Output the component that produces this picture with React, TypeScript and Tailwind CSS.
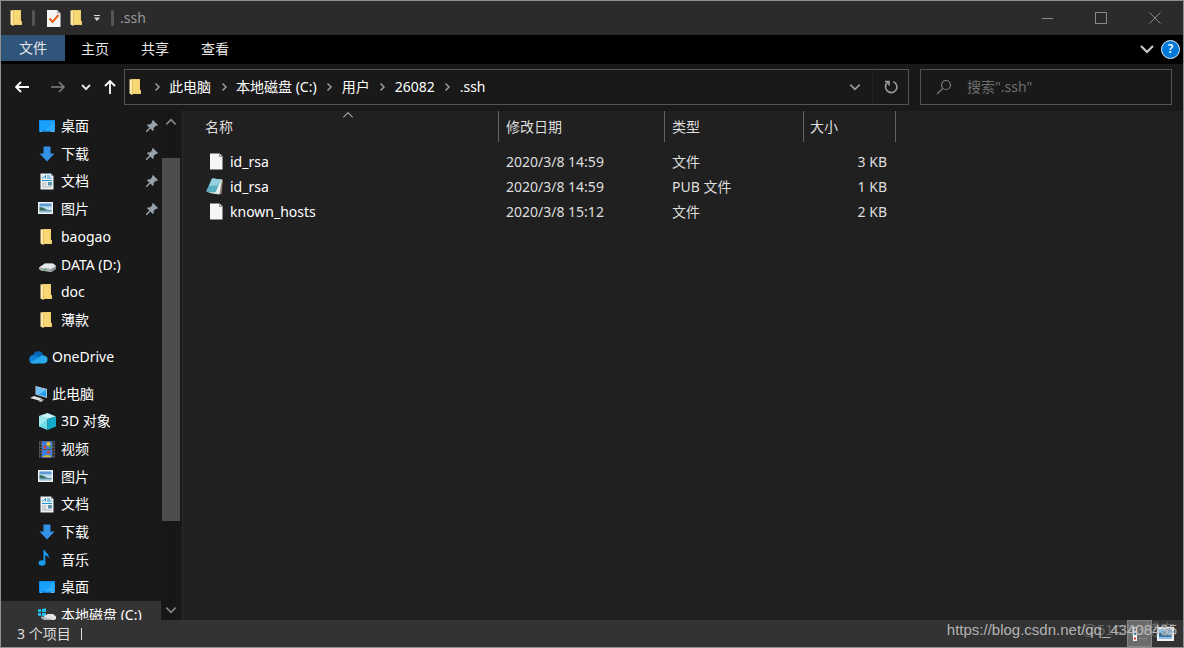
import type { ReactNode } from "react";

type IconProps = { className?: string };

function FolderIcon({ className = "" }: IconProps) {
  return (
    <svg viewBox="0 0 16 16" className={`size-4 shrink-0 ${className}`}>
      <path d="M3 0h9v10.500l1 1V15H3z" fill="#e9c265" />
      <path d="M5 .5h6.500v10.300l1 1V14.500H5z" fill="#f8d775" />
      <path d="M1.500 0l3 1.500V16l-3-1.500z" fill="#ffeaa8" />
      <path d="M4.500 1.500V16" stroke="#d9ae4c" strokeWidth="0.600" />
    </svg>
  );
}

function DesktopIcon() {
  return (
    <svg viewBox="0 0 16 16" className="size-4 shrink-0">
      <rect x="0" y="2" width="16" height="12" fill="#0f78d0" />
      <rect x="0.500" y="2.500" width="15" height="10" fill="#18a0fb" />
      <path d="M6 12.500L15.500 4v8.500z" fill="#2fabff" />
      <path d="M1 13.300h2m9 0h3" stroke="#bfe4ff" strokeWidth="0.700" />
    </svg>
  );
}

function DownloadIcon() {
  return (
    <svg viewBox="0 0 16 16" className="size-4 shrink-0">
      <path d="M4.500 .5h7v7H15.500L8 15.500 .5 7.500h4z" fill="#3391e6" />
    </svg>
  );
}

function DocumentIcon() {
  return (
    <svg viewBox="0 0 16 17" className="h-[17px] w-4 shrink-0">
      <path d="M1.500 .5H12l2.500 2.500v13.500h-13z" fill="#eef0f1" />
      <path d="M12 .5V3h2.500z" fill="#8f969c" />
      <path d="M3 5.500C4.500 5 5.500 3 6.500 2.500V5.500M8 3h3M8 5h4.500M3 7.500h10" stroke="#2492d2" fill="none" />
      <path d="M3 10h4.500M3 12h4.500M3 14h9.500" stroke="#a5abb0" strokeWidth="0.900" />
      <rect x="9" y="9" width="4" height="3.500" fill="#5a93ae" />
    </svg>
  );
}

function PictureIcon() {
  return (
    <svg viewBox="0 0 16 16" className="-ml-0.5 size-4 shrink-0">
      <rect x="0" y="1" width="15" height="12" fill="#f2f2f2" />
      <rect x="1.500" y="2.500" width="12" height="9" fill="#c4def1" />
      <path d="M1.500 2.500h12v3h-12z" fill="#5f9bd4" />
      <path d="M1.500 5.500h12v1.500l-12-.5z" fill="#b9d8ee" />
      <path d="M1.500 6l3 .5 5 2.500h4v1h-12z" fill="#376d58" />
      <path d="M1.500 9.500h12v2h-12z" fill="#8fbad4" />
    </svg>
  );
}

function DriveIcon() {
  return (
    <svg viewBox="0 0 17 16" className="h-4 w-[17px] shrink-0">
      <path d="M0 10.500l6-4h8l3 2.500v3l-4 3-11-1.500-2-1.500z" fill="#8d9296" />
      <path d="M0 10.500l6-4h8l3 2.500-5 3z" fill="#e6e9eb" />
      <path d="M0 10.500l12 1.500v3l-10-1.500-2-1.500z" fill="#a7acb0" />
      <path d="M4.500 12.500l3 .5" stroke="#35c24b" strokeWidth="1.200" />
    </svg>
  );
}

function SystemDriveIcon() {
  return (
    <svg viewBox="0 0 18 16" className="h-4 w-[18px] shrink-0">
      <path d="M0 2.500l3-.5v3H0zM4 2l4-.8V5H4zM0 6h3v3l-3-.4zM4 6h4v4l-4-.7z" fill="#1fc3ef" />
      <path d="M6 9l4-2h5l3 2.500V12l-4 2-7-1z" fill="#e2e5e7" />
      <path d="M3 9.500l11 2.500v2.500L6 13l-3-2z" fill="#b4b9bc" />
    </svg>
  );
}

function OneDriveIcon() {
  return (
    <svg viewBox="0 0 19 13" className="h-[13px] w-[19px] shrink-0">
      <path d="M4 5A5.200 5.200 0 0 1 14 3.500L16 6 9 9 2 7z" fill="#0364b8" />
      <path d="M4.800 4.300A4 4 0 0 1 8 5l7 3.500-8 4H4A4.100 4.100 0 0 1 4.800 4.300z" fill="#0f7fd8" />
      <path d="M10 6.500A4.600 4.600 0 0 1 15.500 4.800 3.900 3.900 0 0 1 15 12.500H4a4 4 0 0 1-2.800-1.200z" fill="#28a8ea" />
    </svg>
  );
}

function ComputerIcon() {
  return (
    <svg viewBox="0 0 17 16" className="h-4 w-[17px] shrink-0">
      <path d="M5.500 0l11.500 3v9L5.500 8.500z" fill="#cfd8df" />
      <path d="M6.500 1.200l9.800 2.500v7.300L6.500 8z" fill="#249cf0" />
      <path d="M6.500 1.200l9.800 2.500L9 8.600 6.500 8z" fill="#6cc3fb" />
      <path d="M0 12l4-2 8 2.500-3 2z" fill="#e3e6e8" />
      <path d="M8 15l4-2 2 .8-3 2.200z" fill="#c1c7cb" />
    </svg>
  );
}

function CubeIcon() {
  return (
    <svg viewBox="0 0 17 17" className="size-[17px] shrink-0">
      <path d="M8.500 0L17 3.500 8.500 6 0 3z" fill="#c4f3f8" />
      <path d="M0 3l8.500 3v11L0 13.500z" fill="#6edce9" />
      <path d="M17 3.500L8.500 6v11L17 13.500z" fill="#13a9c8" />
      <path d="M0 3l8.500 3L0 13.500z" fill="#9deaf2" />
    </svg>
  );
}

function VideoIcon() {
  return (
    <svg viewBox="0 0 16 17" className="h-[17px] w-4 shrink-0">
      <rect width="16" height="17" fill="#55585c" />
      <path d="M1.500 1v16M14.500 1v16" stroke="#151515" strokeWidth="1.500" strokeDasharray="1.500 1.500" />
      <rect x="3" y="0.500" width="10" height="7.500" fill="#3c7fe0" />
      <rect x="3" y="9" width="10" height="7.500" fill="#3c7fe0" />
      <circle cx="9.500" cy="3" r="2" fill="#f0c32b" />
      <circle cx="6" cy="6" r="1.600" fill="#d8432c" />
      <circle cx="11" cy="6" r="1.300" fill="#48a543" />
      <circle cx="9.500" cy="11" r="1.600" fill="#d8432c" />
      <path d="M4 15.500l3-1.500 5 .5v1.500H4z" fill="#e2b02a" />
    </svg>
  );
}

function MusicIcon() {
  return (
    <svg viewBox="0 0 16 16" className="-mt-1 -ml-1 size-4 shrink-0">
      <ellipse cx="5" cy="13" rx="3.500" ry="2.700" fill="#189bf0" />
      <path d="M6.500 0H8c.3 3 4.500 3.500 3.600 8.200C10.800 6 9.500 5.500 8.300 5.200V13H6.500z" fill="#189bf0" />
    </svg>
  );
}

function PinIcon() {
  return (
    <svg viewBox="0 0 12 12" className="size-3 shrink-0">
      <path d="M7 0l5 5-1 1-1-.3L7.600 8l.2 2-1 1-2.400-2.400L1 12l-1 0 0-1 3.400-3.400L1 5.200l1-1 2 .2L6.300 2 6 1z" fill="#98a2ab" />
    </svg>
  );
}

function Chevron({ d, className }: { d: string; className: string }) {
  return (
    <svg viewBox="0 0 12 12" className={`shrink-0 ${className}`} fill="none" stroke="currentColor">
      <path d={d} />
    </svg>
  );
}

const DOWN = "M2 4l4 4 4-4";
const UP = "M2 8l4-4 4 4";
const RIGHT = "M4.500 2.500l3.500 3.500-3.500 3.500";

function BlankFileIcon() {
  return (
    <svg viewBox="0 0 16 18" className="h-[18px] w-4 shrink-0">
      <path d="M2 .5h9.500l3 3v13H2z" fill="#f6f6f6" />
      <path d="M11.500 .5v3h3" fill="#d5d5d5" stroke="#777" strokeWidth="0.800" />
    </svg>
  );
}

function NotebookIcon() {
  return (
    <svg viewBox="0 0 18 18" className="-ml-0.5 h-[18px] w-[18px] shrink-0">
      <path d="M14 1l3 1-1.500 14.500L12 15z" fill="#8f7c63" />
      <path d="M7 .5l9 1-2.500 15L7 15z" fill="#e4eff1" />
      <path d="M6 .5l9 1-5.500 13L0 13.500z" fill="#58aebf" />
      <path d="M6 .5l9 1-3 6-9 .5z" fill="#94cfdb" />
      <path d="M0 13.500l9.500 1 4 2L6 15.500z" fill="#cfdfe2" />
    </svg>
  );
}

type NavItem = { label: string; icon: ReactNode; pinned?: boolean; root?: boolean; active?: boolean };

const quickAccess: NavItem[] = [
  { label: "桌面", icon: <DesktopIcon />, pinned: true },
  { label: "下载", icon: <DownloadIcon />, pinned: true },
  { label: "文档", icon: <DocumentIcon />, pinned: true },
  { label: "图片", icon: <PictureIcon />, pinned: true },
  { label: "baogao", icon: <FolderIcon /> },
  { label: "DATA (D:)", icon: <DriveIcon /> },
  { label: "doc", icon: <FolderIcon /> },
  { label: "薄款", icon: <FolderIcon /> },
];

const oneDrive: NavItem = { label: "OneDrive", icon: <OneDriveIcon />, root: true };

const thisPc: NavItem[] = [
  { label: "此电脑", icon: <ComputerIcon />, root: true },
  { label: "3D 对象", icon: <CubeIcon /> },
  { label: "视频", icon: <VideoIcon /> },
  { label: "图片", icon: <PictureIcon /> },
  { label: "文档", icon: <DocumentIcon /> },
  { label: "下载", icon: <DownloadIcon /> },
  { label: "音乐", icon: <MusicIcon /> },
  { label: "桌面", icon: <DesktopIcon /> },
  { label: "本地磁盘 (C:)", icon: <SystemDriveIcon />, active: true },
];

const files = [
  { name: "id_rsa", date: "2020/3/8 14:59", type: "文件", size: "3 KB", icon: <BlankFileIcon /> },
  { name: "id_rsa", date: "2020/3/8 14:59", type: "PUB 文件", size: "1 KB", icon: <NotebookIcon /> },
  { name: "known_hosts", date: "2020/3/8 15:12", type: "文件", size: "2 KB", icon: <BlankFileIcon /> },
];

const crumbs = ["此电脑", "本地磁盘 (C:)", "用户", "26082", ".ssh"];

function NavRow({ item }: { item: NavItem }) {
  return (
    <li className={item.active ? "bg-[#333333]" : ""}>
      <a href="#" className={`flex h-full items-center pr-[3px] text-white ${item.root ? "pl-7" : "pl-[37px]"}`}>
        <span className="flex w-[18px] shrink-0 justify-center">{item.icon}</span>
        <span className="ml-[5px] flex-1 whitespace-nowrap">{item.label}</span>
        {item.pinned && <PinIcon />}
      </a>
    </li>
  );
}

function TitleBar() {
  return (
    <header className="flex h-[34px] shrink-0 items-center bg-[#2b2b2b] text-[#999999]">
      <FolderIcon className="ml-2" />
      <span className="ml-[7px] h-4 w-[3px] rounded-xs bg-[#555555]" />
      <button aria-label="属性" className="ml-3">
        <svg viewBox="0 0 14 17" className="h-[17px] w-3.5">
          <path d="M0 0h10l3.500 3.500V17H0z" fill="#f5f5f5" />
          <path d="M10 0v3.500h3.500z" fill="#b5b5b5" />
          <path d="M2.500 8.500l3 3.500 6-7" fill="none" stroke="#e8611c" strokeWidth="2" />
        </svg>
      </button>
      <button aria-label="新建文件夹" className="ml-2">
        <FolderIcon />
      </button>
      <button aria-label="自定义快速访问工具栏" className="ml-2">
        <svg viewBox="0 0 8 8" className="size-2">
          <path d="M1 1.500h6" stroke="#dddddd" />
          <path d="M1 3.500h6L4 7z" fill="#dddddd" />
        </svg>
      </button>
      <span className="ml-2.5 h-4 w-[3px] rounded-xs bg-[#555555]" />
      <h1 className="ml-1.5">.ssh</h1>
      <div className="mr-px ml-auto flex h-full">
        <button aria-label="最小化" className="flex w-[54px] items-center justify-center">
          <span className="h-px w-[11px] bg-[#888888]" />
        </button>
        <button aria-label="最大化" className="flex w-[54px] items-center justify-center">
          <span className="size-3 border border-[#888888]" />
        </button>
        <button aria-label="关闭" className="flex w-[54px] items-center justify-center">
          <svg viewBox="0 0 12 12" className="size-3" stroke="#888888">
            <path d="M.5.5l11 11M11.500.5l-11 11" />
          </svg>
        </button>
      </div>
    </header>
  );
}

function Ribbon() {
  return (
    <nav className="flex h-[29px] shrink-0 bg-black text-[#e8e8e8]">
      <button className="h-[26px] w-16 bg-[#30557b]">文件</button>
      <button className="h-7 w-[60px]">主页</button>
      <button className="h-7 w-[60px]">共享</button>
      <button className="h-7 w-[60px]">查看</button>
      <button aria-label="展开功能区" className="ml-auto h-7 text-[#c8c8c8]">
        <Chevron d={DOWN} className="size-[18px] stroke-[1.500]" />
      </button>
      <button aria-label="帮助" className="mr-[3px] ml-[5px] flex h-7 items-center">
        <span className="flex size-[19px] items-center justify-center rounded-full border border-[#e5eef8] bg-[#0078d7] text-xs font-semibold text-white">
          ?
        </span>
      </button>
    </nav>
  );
}

function AddressBar() {
  return (
    <div className="flex shrink-0 bg-[#191919] pt-[5px] pr-[11px] pb-1.5 pl-[3px]">
      <button aria-label="后退" className="flex w-9 items-center justify-center text-white">
        <svg viewBox="0 0 14 12" className="h-3 w-3.5" fill="none" stroke="currentColor" strokeWidth="1.800">
          <path d="M14 6H1M6 1L1 6l5 5" />
        </svg>
      </button>
      <button aria-label="前进" className="flex w-9 items-center justify-center text-[#808080]">
        <svg viewBox="0 0 14 12" className="h-3 w-3.5" fill="none" stroke="currentColor" strokeWidth="1.500">
          <path d="M0 6h13M8 1l5 5-5 5" />
        </svg>
      </button>
      <button aria-label="最近浏览的位置" className="flex w-5 items-center justify-center text-[#e0e0e0]">
        <Chevron d={DOWN} className="size-3 stroke-2" />
      </button>
      <button aria-label="向上" className="flex w-7 items-center justify-center text-white">
        <svg viewBox="0 0 12 14" className="h-3.5 w-3" fill="none" stroke="currentColor" strokeWidth="1.800">
          <path d="M6 14V1M1 6l5-5 5 5" />
        </svg>
      </button>

      <div className="flex h-9 min-w-0 flex-1 items-center border border-[#535353] pl-[3px] text-white">
        <FolderIcon />
        {crumbs.map((crumb) => (
          <div key={crumb} className="flex items-center">
            <span className="flex w-[25px] justify-center text-[#9a9a9a]">
              <Chevron d={RIGHT} className="size-3 stroke-[1.500]" />
            </span>
            <button className="whitespace-nowrap">{crumb}</button>
          </div>
        ))}
        <button aria-label="以前的位置" className="ml-auto flex h-full w-[34px] items-center justify-center text-[#9a9a9a]">
          <Chevron d={DOWN} className="size-3.5 stroke-[1.500]" />
        </button>
        <button aria-label="刷新" className="flex h-full w-9 items-center justify-center border-l border-[#222222] text-[#9a9a9a]">
          <svg viewBox="0 0 14 14" className="size-3.5" fill="none" stroke="currentColor" strokeWidth="1.600">
            <path d="M9.500 1.700A5.700 5.700 0 1 1 4 2.200M1 1.500h4v4" />
          </svg>
        </button>
      </div>

      <label className="ml-[11px] flex h-9 w-[252px] items-center border border-[#535353] pl-[15px] text-[#7a7a7a]">
        <svg viewBox="0 0 16 16" className="size-4 shrink-0" fill="none" stroke="currentColor" strokeWidth="1.200">
          <circle cx="10" cy="6" r="4.500" />
          <path d="M7 9.300L1 15" />
        </svg>
        <input
          type="text"
          aria-label="搜索"
          placeholder={'搜索".ssh"'}
          className="ml-[15px] w-full min-w-0 bg-transparent outline-none placeholder:text-[#6d6d6d]"
        />
      </label>
    </div>
  );
}

function Sidebar() {
  return (
    <aside className="flex w-[182px] shrink-0 border-r border-[#2b2b2b] bg-[#191919]">
      <div className="mr-px flex-1 overflow-hidden pt-px">
        <ul className="grid h-[222px] auto-rows-fr">
          {quickAccess.map((item) => (
            <NavRow key={item.label} item={item} />
          ))}
        </ul>
        <ul className="my-[9px] grid h-7">
          <NavRow item={oneDrive} />
        </ul>
        <ul className="grid h-[249px] auto-rows-fr">
          {thisPc.map((item) => (
            <NavRow key={item.label} item={item} />
          ))}
        </ul>
      </div>
      <div className="mr-0.5 flex w-[18px] flex-col items-center bg-[#171717] text-[#858585]">
        <button aria-label="向上滚动" className="flex h-[22px] items-center">
          <Chevron d={UP} className="size-3.5 stroke-[1.500]" />
        </button>
        <div className="mt-[25px] h-[363px] w-full bg-[#4d4d4d]" />
        <button aria-label="向下滚动" className="mt-auto flex h-5 items-center">
          <Chevron d={DOWN} className="size-3.5 stroke-[1.500]" />
        </button>
      </div>
    </aside>
  );
}

function FileList() {
  return (
    <main className="relative min-w-0 flex-1 overflow-hidden bg-[#202020]">
      <Chevron d={UP} className="absolute top-[-3px] left-[158px] size-3.5 text-[#a0a0a0]" />
      <table className="w-[713px] table-fixed border-separate border-spacing-0 text-left text-[#dedede]">
        <colgroup>
          <col className="w-[316px]" />
          <col className="w-[166px]" />
          <col className="w-[139px]" />
          <col className="w-[92px]" />
        </colgroup>
        <thead>
          <tr className="h-[31px]">
            <th className="border-r border-[#636363] pl-[22px] font-normal">名称</th>
            <th className="border-r border-[#636363] pl-[7px] font-normal">修改日期</th>
            <th className="border-r border-[#636363] pl-[7px] font-normal">类型</th>
            <th className="border-r border-[#636363] pl-1.5 font-normal">大小</th>
          </tr>
        </thead>
        <tbody>
          <tr aria-hidden="true" className="h-[7px]" />
          {files.map((file, i) => (
            <tr key={i} className="h-[25px]">
              <td className="pl-[25px] text-white">
                <span className="flex items-center">
                  {file.icon}
                  <span className="ml-1.5">{file.name}</span>
                </span>
              </td>
              <td className="pl-[7px]">{file.date}</td>
              <td className="pl-[7px]">{file.type}</td>
              <td className="pr-[9px] text-right">{file.size}</td>
            </tr>
          ))}
        </tbody>
      </table>
    </main>
  );
}

function StatusBar() {
  return (
    <footer className="relative flex h-[27px] shrink-0 items-center bg-[#333333] pl-4 text-[#dedede]">
      <span>3 个项目</span>
      <span className="ml-2.5 h-3 w-px bg-[#dedede]" />
      <button aria-label="详细信息" className="ml-auto flex h-full w-[25px] items-center border border-[#858585] bg-[#6b6b6b] pl-1">
        <svg viewBox="0 0 16 16" className="size-4">
          <path d="M1 1h4v14H1z" fill="#f5f5f5" />
          <path d="M2 2.500h2v2H2z" fill="#555" />
          <path d="M2 7h2v2H2z" fill="#3c7a9c" />
          <path d="M2 11.500h2v2H2z" fill="#d13c28" />
          <path d="M7 3.500h3m1 0h4M7 8h3m1 0h4M7 12.500h3m1 0h4" stroke="#8c8c8c" />
        </svg>
      </button>
      <button aria-label="大缩略图" className="mr-[9px] ml-[5px]">
        <svg viewBox="0 0 17 14" className="h-3.5 w-[17px]">
          <path d="M0 0h17v14H0z" fill="#f2f2f2" />
          <path d="M2 2h13v10H2z" fill="#8fc0e8" />
          <path d="M2 5l5 1 8 3v1H2z" fill="#38749c" />
        </svg>
      </button>
      <p className="absolute top-0 right-2 font-['Liberation_Sans','Noto_Sans_CJK_SC',sans-serif] text-[15px] leading-5 text-[#8a8a8a]/60">
        @51CTO博客
      </p>
      <p className="absolute top-0 right-1.5 font-['Liberation_Sans',sans-serif] text-[15px] leading-5 text-[#c4c4c4]/90">
        https://blog.csdn.net/qq_43408435
      </p>
    </footer>
  );
}

export default function App() {
  return (
    <div className="flex h-screen flex-col overflow-hidden border border-[#8f9191] bg-[#202020] font-['Noto_Sans','Noto_Sans_CJK_SC',sans-serif] text-sm leading-5">
      <TitleBar />
      <Ribbon />
      <AddressBar />
      <div className="flex min-h-0 flex-1">
        <Sidebar />
        <FileList />
      </div>
      <StatusBar />
    </div>
  );
}
